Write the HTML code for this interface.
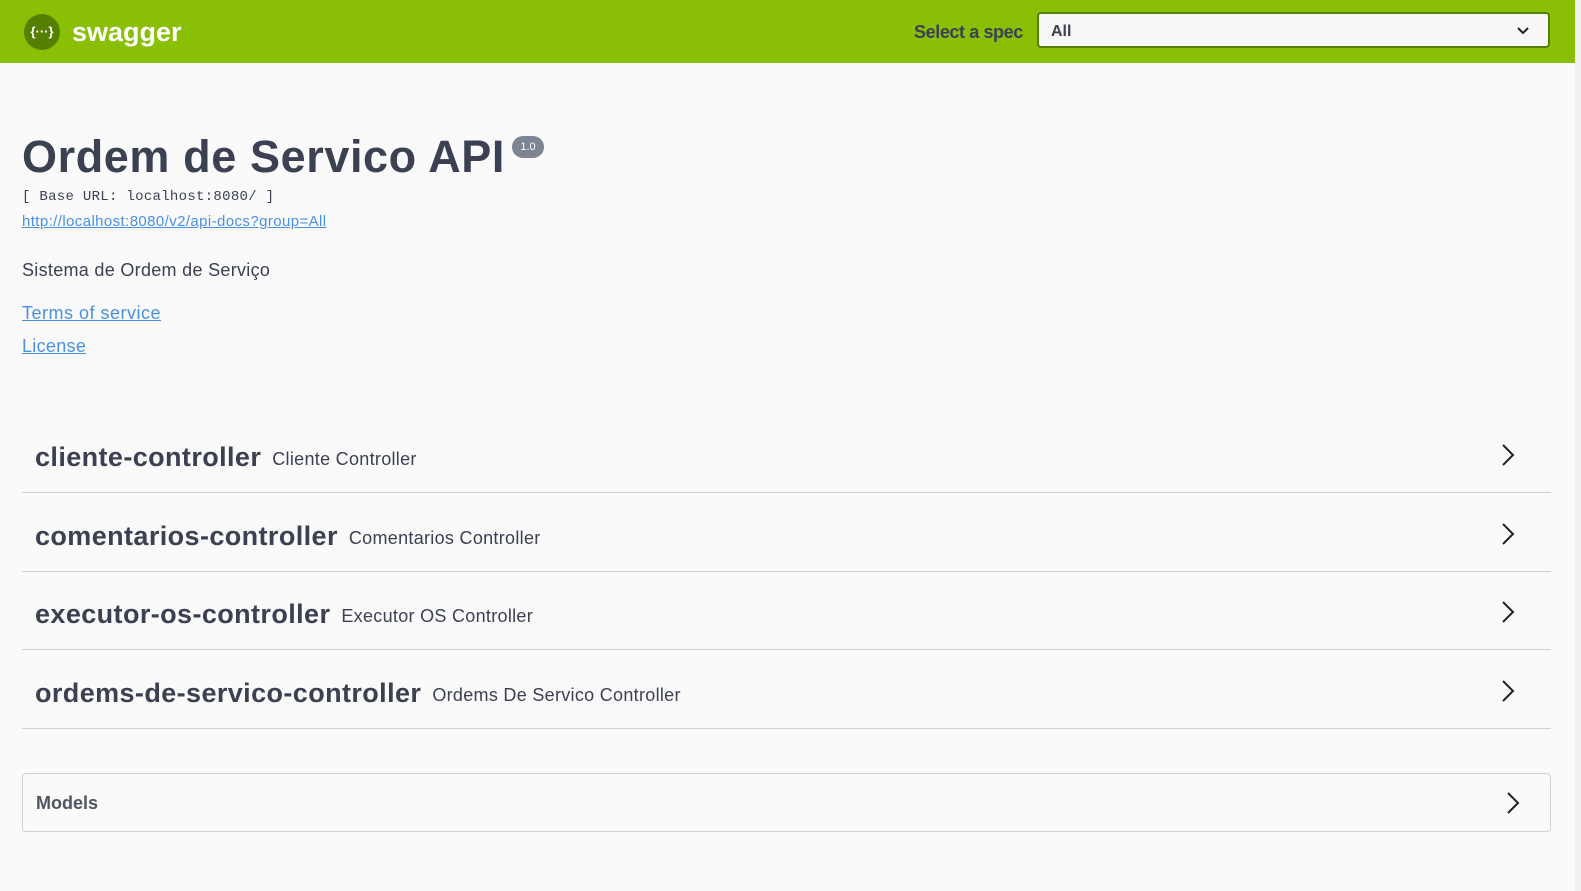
<!DOCTYPE html>
<html><head><meta charset="utf-8"><style>
*{margin:0;padding:0;box-sizing:border-box}
body{width:1581px;height:891px;background:#f0f0f0;font-family:"Liberation Sans",sans-serif;color:#3b4151;overflow:hidden;position:relative}
#page{position:absolute;left:0;top:0;width:1575px;height:891px;background:#fafafa}
.top{position:absolute;left:0;top:0;width:1575px;height:63px;background:#89bf04}
.logo{position:absolute;left:24px;top:14px;width:36px;height:36px;border-radius:50%;background:#547f00;color:#fff;font-size:13px;font-weight:bold;text-align:center;line-height:35px}
.sw{position:absolute;left:72px;top:17px;color:#fff;font-size:27px;font-weight:bold;letter-spacing:0px}
.sel-l{position:absolute;left:914px;top:22px;font-size:18px;font-weight:bold;color:#3b4151;letter-spacing:-0.4px}
.sel{position:absolute;left:1037px;top:12px;width:513px;height:36px;border:2px solid #547f00;border-radius:4px;background:#f7f7f7;font-weight:bold;font-size:16px;padding:9px 12px}
.sel svg{position:absolute;right:18px;top:12px}
.abs{position:absolute;white-space:nowrap}
h1{position:absolute;left:22px;top:131px;font-size:45px;font-weight:bold;letter-spacing:0.6px}
.ver{position:absolute;left:512px;top:136px;width:32px;height:22px;border-radius:11px;background:#7d8492;color:#fff;font-size:11px;text-align:center;line-height:22px}
a{color:#4990e2;text-decoration:underline}
.row{position:absolute;left:22px;width:1529px;height:78px;border-bottom:1px solid #d0d0d3}
.row b{position:absolute;left:13px;top:27px;font-size:27px;letter-spacing:0.4px}
.row span{font-size:18px;font-weight:normal;margin-left:11px;letter-spacing:0.3px;position:relative;top:-1px}
.row svg{position:absolute;right:36px;top:28px}
.models{position:absolute;left:22px;top:773px;width:1529px;height:59px;border:1px solid #d0d0d3;border-radius:4px}
</style></head><body><div id="page">
<div class="top">
<div class="logo">{···}</div>
<div class="sw">swagger</div>
<div class="sel-l">Select a spec</div>
<div class="sel">All<svg width="14" height="9" viewBox="0 0 14 9"><path d="M2 2l5 5 5-5" fill="none" stroke="#222" stroke-width="2"/></svg></div>
</div>
<h1>Ordem de Servico API</h1>
<div class="ver">1.0</div>
<div class="abs" style="left:22px;top:189px;font-family:'Liberation Mono',monospace;font-size:14px;letter-spacing:0.3px;color:#3b4151">[ Base URL: localhost:8080/ ]</div>
<div class="abs" style="left:22px;top:213px;font-size:15px;letter-spacing:0.4px"><a>http://localhost:8080/v2/api-docs?group=All</a></div>
<div class="abs" style="left:22px;top:260px;font-size:18px;letter-spacing:0.3px">Sistema de Ordem de Serviço</div>
<div class="abs" style="left:22px;top:303px;font-size:18px;letter-spacing:0.5px"><a>Terms of service</a></div>
<div class="abs" style="left:22px;top:336px;font-size:18px;letter-spacing:0.3px"><a>License</a></div>
<div class="row" style="top:415px"><b>cliente-controller<span>Cliente Controller</span></b><svg width="14" height="24" viewBox="0 0 14 24"><path d="M2 2l10 10-10 10" fill="none" stroke="#222" stroke-width="2"/></svg></div>
<div class="row" style="top:494px"><b>comentarios-controller<span>Comentarios Controller</span></b><svg width="14" height="24" viewBox="0 0 14 24"><path d="M2 2l10 10-10 10" fill="none" stroke="#222" stroke-width="2"/></svg></div>
<div class="row" style="top:572px"><b>executor-os-controller<span>Executor OS Controller</span></b><svg width="14" height="24" viewBox="0 0 14 24"><path d="M2 2l10 10-10 10" fill="none" stroke="#222" stroke-width="2"/></svg></div>
<div class="row" style="top:651px"><b>ordems-de-servico-controller<span>Ordems De Servico Controller</span></b><svg width="14" height="24" viewBox="0 0 14 24"><path d="M2 2l10 10-10 10" fill="none" stroke="#222" stroke-width="2"/></svg></div>
<div class="models"><b class="abs" style="left:13px;top:19px;font-size:18px;color:#505560">Models</b><svg class="abs" style="right:30px;top:17px" width="14" height="24" viewBox="0 0 14 24"><path d="M2 2l10 10-10 10" fill="none" stroke="#222" stroke-width="2"/></svg></div>
</div></body></html>
